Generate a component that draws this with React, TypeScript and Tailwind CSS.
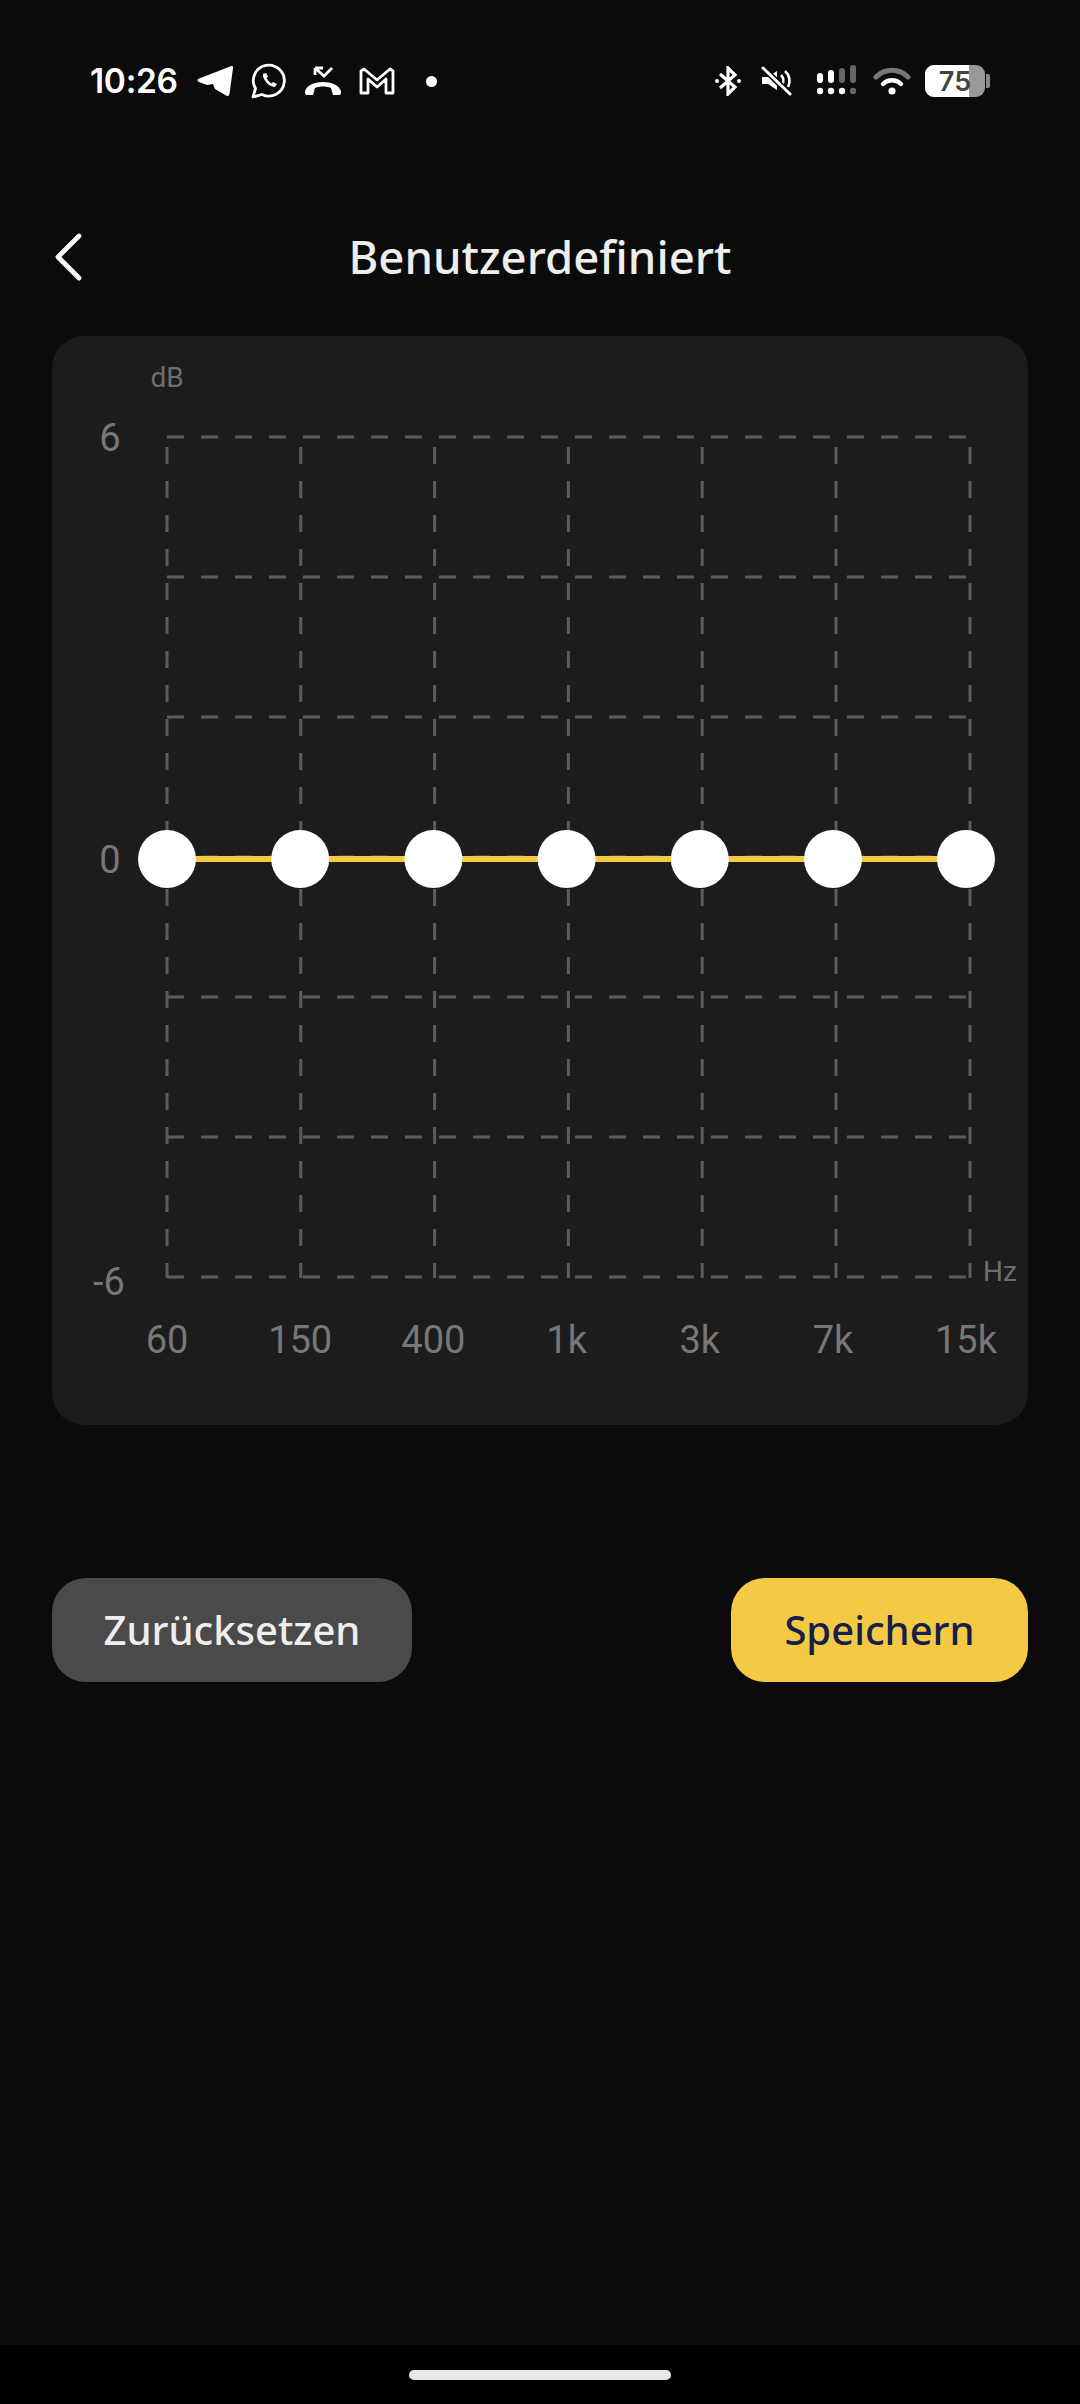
const BANDS = ['60', '150', '400', '1k', '3k', '7k', '15k'];
const GRID_X = [167, 300.8, 434.6, 568.4, 702.2, 836, 970];
const GRID_Y = [437, 577, 717, 857, 997, 1137, 1277];
const DOT_X = [167, 300.2, 433.4, 566.6, 699.8, 833, 966];

function StatusLeft() {
  return (
    <div className="flex items-center">
      <span className="font-['Inter',sans-serif] text-[33.5px] leading-[36px] font-semibold tracking-[-0.3px] text-white w-[107px]">10:26</span>
      <svg width="37" height="32" viewBox="0 0 37 32" className="text-white" fill="currentColor">
        <path d="M1 14 Q-0.5 16 2 17 L10 20 L16 19 L18 24 L30 31 Q32 31.5 32.5 29 L36 3 Q36.5 0 33 1.5 Z" />
      </svg>
      <svg width="36" height="36" viewBox="0 0 36 36" className="ml-[17px]" fill="none" stroke="white">
        <path d="M2 34 L4.5 25.5 A15.5 15.5 0 1 1 11 31.5 Z" strokeWidth="2.8" strokeLinejoin="round" />
        <path d="M12 11 C11 15 17 24 24 24 L26 21 L22 19 L20.5 20.5 C18 19 16.5 17 15.5 15 L17 13.5 L15 10 Z" fill="white" stroke="none" />
      </svg>
      <svg width="38" height="30" viewBox="0 0 38 30" className="ml-[17px]" fill="none" stroke="white">
        <path d="M11 2 V9 M11 2 H19 M11 2 L20 10 L28 2" strokeWidth="2.8" />
        <path d="M1 25 C5 13 33 13 37 25 L37 27 Q37 29 34 29 L29 29 L27 22 C22 20 16 20 11 22 L9 29 L4 29 Q1 29 1 27 Z" fill="white" stroke="none" />
      </svg>
      <svg width="36" height="28" viewBox="0 0 36 28" className="ml-[17px]" fill="none" stroke="white">
        <path d="M2 26 V4 L5 2 L18 13 L31 2 L34 4 V26 H27 V12 L18 20 L9 12 V26 Z" strokeWidth="2.8" strokeLinejoin="round" />
      </svg>
      <div className="w-[11px] h-[11px] rounded-full bg-white ml-[31px]" />
    </div>
  );
}

function StatusRight() {
  return (
    <div className="flex items-center">
      <svg width="26" height="30" viewBox="0 0 26 30" fill="none" stroke="white">
        <path d="M5 8 L20 21 L13 28 V2 L20 9 L5 22" strokeWidth="3.2" />
        <circle cx="2" cy="15" r="2" fill="white" stroke="none" />
        <circle cx="24" cy="15" r="2" fill="white" stroke="none" />
      </svg>
      <svg width="32" height="30" viewBox="0 0 32 30" className="ml-[20px]" fill="none" stroke="white">
        <path d="M1 11 H7 L16 5 V24 L7 18 H1 Z" fill="white" stroke="none" />
        <path d="M20 9 A8 8 0 0 1 21 19 M24 5 A13 13 0 0 1 27 21" strokeWidth="2.6" />
        <path d="M2 2 L29 28" stroke="#0b0b0b" strokeWidth="6" />
        <path d="M2 2 L29 28" strokeWidth="3" strokeLinecap="round" />
      </svg>
      <svg width="40" height="32" viewBox="0 0 40 32" className="ml-[24px]">
        <rect x="0" y="8" width="6" height="10" rx="3" fill="white" />
        <rect x="11" y="5" width="6" height="13" rx="3" fill="white" />
        <rect x="22" y="3" width="6" height="15" rx="3" fill="#666" />
        <rect x="33" y="0" width="6" height="18" rx="3" fill="#666" />
        <circle cx="3" cy="26" r="3.2" fill="white" />
        <circle cx="14" cy="26" r="3.2" fill="white" />
        <circle cx="25" cy="26" r="3.2" fill="white" />
        <circle cx="36" cy="26" r="3.2" fill="#666" />
      </svg>
      <svg width="38" height="30" viewBox="0 0 38 30" className="ml-[16px]" fill="none">
        <path d="M3 11 C12 2 26 2 35 11" stroke="#777" strokeWidth="5" strokeLinecap="round" />
        <path d="M10 18 C15 13 23 13 28 18" stroke="white" strokeWidth="4.4" strokeLinecap="round" />
        <circle cx="19" cy="25" r="3.6" fill="white" />
      </svg>
      <div className="flex items-center ml-[14px]">
        <div className="relative w-[60px] h-[32px] rounded-[9px] overflow-hidden bg-[#999999] flex items-center justify-center">
          <div className="absolute left-0 top-0 bottom-0 w-[44px] bg-white" />
          <span className="relative font-['Inter',sans-serif] text-[27px] leading-none font-semibold text-[#444444]">75</span>
        </div>
        <div className="w-[4px] h-[14px] rounded-r-[2px] bg-[#888888] ml-[1px]" />
      </div>
    </div>
  );
}

function Chart() {
  return (
    <svg viewBox="52 336 976 1089" className="block w-full h-full font-['Roboto',sans-serif]">
      {GRID_Y.map(y => (
        <line key={y} x1={167} y1={y} x2={970} y2={y} stroke="#5c5c5c" strokeWidth={3} strokeDasharray="17 17" />
      ))}
      {GRID_X.map(x => (
        <line key={x} x1={x} y1={447} x2={x} y2={1278} stroke="#5c5c5c" strokeWidth={3} strokeDasharray="17 17" />
      ))}
      <line x1={167} y1={859} x2={966} y2={859} stroke="#f4ca44" strokeWidth={6} />
      {DOT_X.map(x => (
        <circle key={x} cx={x} cy={859} r={29} fill="white" />
      ))}
      <text x={167} y={387} textAnchor="middle" fontSize={28} fill="#6e6e6e">dB</text>
      <text x={110} y={451} textAnchor="middle" fontSize={38} fill="#777777">6</text>
      <text x={110} y={873} textAnchor="middle" fontSize={38} fill="#777777">0</text>
      <text x={109} y={1295} textAnchor="middle" fontSize={38} fill="#777777">-6</text>
      <text x={1000} y={1281} textAnchor="middle" fontSize={28} fill="#6e6e6e">Hz</text>
      {BANDS.map((b, i) => (
        <text key={b} x={DOT_X[i]} y={1353} textAnchor="middle" fontSize={38} fill="#777777">{b}</text>
      ))}
    </svg>
  );
}

export default function App() {
  return (
    <div className="w-[1080px] h-[2404px] flex flex-col bg-[#0b0b0b] font-['Noto_Sans',sans-serif]">
      <div className="h-[225px] pt-[63px] pl-[90px] pr-[90px] shrink-0">
        <div className="h-[36px] flex items-center justify-between">
          <StatusLeft />
          <StatusRight />
        </div>
      </div>

      <div className="relative h-[64px] pb-[3px] flex items-center justify-center shrink-0">
        <svg width="30" height="48" viewBox="0 0 30 48" className="absolute left-[53px] top-[8px]" fill="none" stroke="white">
          <path d="M26 3 L5 24 L26 45" strokeWidth="4.8" strokeLinecap="round" strokeLinejoin="round" />
        </svg>
        <h1 className="text-[45.5px] leading-[60px] font-medium text-[#eeeeee]">Benutzerdefiniert</h1>
      </div>

      <div className="mx-[52px] mt-[47px] h-[1089px] rounded-[32px] bg-[#1c1c1c] overflow-hidden shrink-0">
        <Chart />
      </div>

      <div className="mx-[52px] mt-[153px] flex justify-between shrink-0">
        <button className="w-[360px] h-[104px] rounded-[34px] bg-[#4a4a4a] text-[40px] font-medium text-[#eeeeee]">Zurücksetzen</button>
        <button className="w-[297px] h-[104px] rounded-[34px] bg-[#f4ca44] text-[40px] font-medium text-[#14204a]">Speichern</button>
      </div>

      <div className="flex-1" />

      <div className="h-[59px] bg-black flex justify-center pt-[25px] shrink-0">
        <div className="w-[262px] h-[10px] rounded-full bg-[#e8e8e8]" />
      </div>
    </div>
  );
}
